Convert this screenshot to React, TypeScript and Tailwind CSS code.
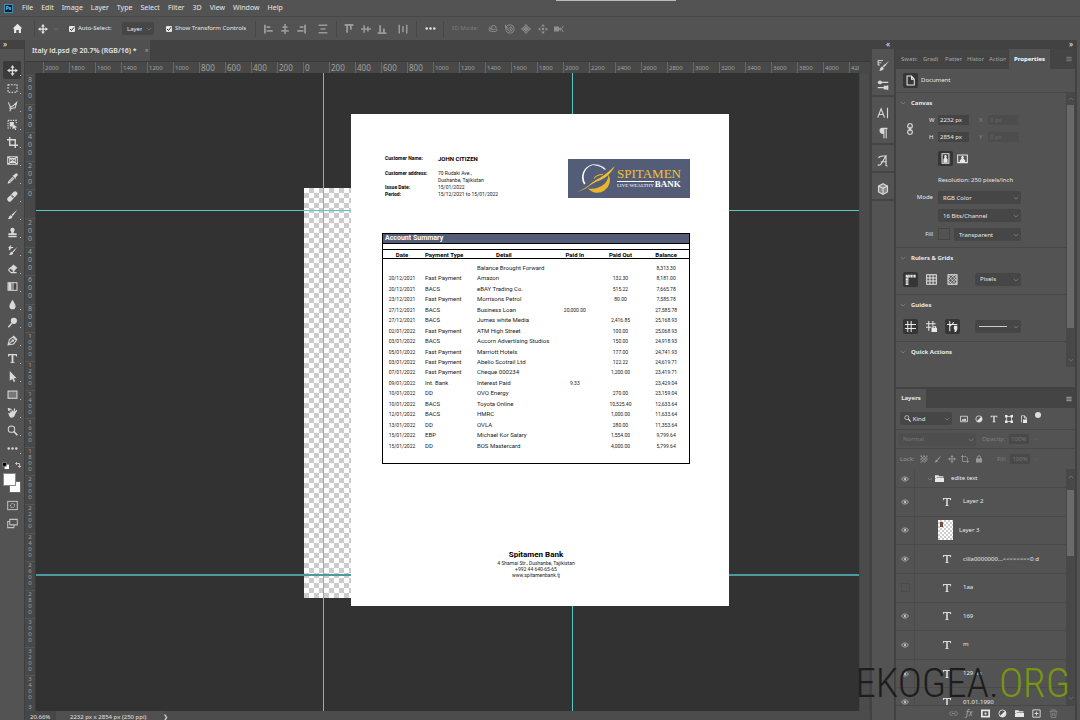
import React, { useState } from "react";

type IconProps = { className?: string; children: React.ReactNode };

const Icon = ({ className = "size-3", children }: IconProps) => (
  <svg viewBox="0 0 16 16" className={`shrink-0 ${className}`} fill="none" stroke="currentColor" strokeWidth="1.5" aria-hidden="true">
    {children}
  </svg>
);

const solid = { fill: "currentColor", stroke: "none" };

const glyphs: Record<string, React.ReactNode> = {
  home: <path {...solid} d="M8 1 15 8h-2v6.500H9.800V10H6.200v4.500H3V8H1z" />,
  move: (
    <>
      <path strokeWidth="2" d="M8 3v10M3 8h10" />
      <path {...solid} d="M8 0l3 4H5zM8 16l-3-4h6zM0 8l4-3v6zM16 8l-4 3V5z" />
    </>
  ),
  marquee: <rect x="1.500" y="2.500" width="13" height="11" strokeDasharray="2.600 1.600" />,
  lasso: <path d="M2 2l3 7 4-2 5-5-2 8-6 1-3-1M6 11l-2 4" />,
  quick: (
    <>
      <path strokeDasharray="2 1.500" d="M1.500 2h12v5M1.500 2v11H6" />
      <path {...solid} d="M4 4.500h6V8L8 7v4H4zM8 7l7 5-3 .500 1.500 3-1.600.500-1.500-3L8 15z" />
    </>
  ),
  crop: <path strokeWidth="2" d="M4 0v12h12M0 4h12v12" />,
  frame: (
    <>
      <path d="M1 2.500h14v11H1zM1 2.500l14 11M15 2.500l-14 11" />
      <path d="M4 5h8v6H4z" />
    </>
  ),
  dropper: (
    <>
      <path d="M9 6l-6.500 6.500L2 14.500l2-.500L10.500 7.500" />
      <path {...solid} d="M8 4l4.500 4.500 1-1-1-1L15 4a2 2 0 0 0-3-3L9.500 3.500l-.700-.700z" />
    </>
  ),
  heal: (
    <>
      <path {...solid} d="M1.500 9.500l8-8a3 3 0 0 1 4.500 0 3 3 0 0 1 0 4.500l-8 8.500a3 3 0 0 1-4.500 0 3.400 3.400 0 0 1 0-5z" />
      <path stroke="#535353" strokeWidth="1" d="M5 6l5 5M6 5l5 5M7 8l2 0" />
    </>
  ),
  brush: <path {...solid} d="M15 1L8.500 10 6.500 8.200zM6 9l2 2c-.300 3-3.500 4-7 3.500C3 13.500 2.500 9.500 6 9z" />,
  stamp: <path {...solid} d="M6.500 9C6.500 7 5 6 5 4a3 3 0 0 1 6 0c0 2-1.500 3-1.500 5H14v3H2V9zM2 13h12v2H2z" />,
  history: (
    <>
      <path {...solid} d="M15 3L9.500 10.500 8 9zM7.500 9.500l1.500 2c-.500 2.500-3 3.500-6 3 1.500-1 1.500-4.500 4.500-5z" />
      <path d="M3 3.500h6M3.500 3.500v4M6 1L3 3.500 6 6" />
    </>
  ),
  eraser: (
    <>
      <path d="M2 10l4 4h8M2 10l3-3 5 5-2 2" />
      <path {...solid} d="M5 6.500L9.500 2 15 7l-4.500 4.800z" />
    </>
  ),
  drop: <path {...solid} d="M8 1c2 4 4.500 6 4.500 9.500a4.500 4.500 0 0 1-9 0C3.500 7 6 5 8 1z" />,
  dodge: (
    <>
      <circle {...solid} cx="10" cy="5.500" r="4.500" />
      <path strokeWidth="2" d="M7 9l-5 6" />
    </>
  ),
  pen: (
    <>
      <path d="M1.500 14.500l2-8 5-3.500 5 5-4 5z" />
      <path d="M2 14l5.500-5.500" />
      <circle cx="8.500" cy="8" r="1" />
      <path strokeWidth="2" d="M9 1.500l5.500 5.500" />
    </>
  ),
  type: <path {...solid} d="M1.500 1.500h13V5h-1.200c-.300-1.400-.800-1.800-2-1.800H9.300v9c0 .900.400 1.200 1.700 1.300v1H5v-1c1.300-.100 1.700-.400 1.700-1.300v-9h-2c-1.200 0-1.700.400-2 1.800H1.500z" />,
  arrow: <path {...solid} d="M4 0l10 10.500-4.200.200 2.200 4.300-2 1-2.200-4.500L4 14z" />,
  rect: <rect x="1.500" y="3" width="13" height="10.500" fill="#777" />,
  hand: <path {...solid} d="M2 9c1-1.500 2 0 2.500.500L5 5l1.500 3 .500-5L9 7l2-6 1 2-1 4 3-3 .800 1.500-3 5c-1 4-3 5-5.500 5S2.500 12 2 9zM1 1l6 2-5 3z" />,
  search: (
    <>
      <circle cx="6.500" cy="6" r="4.700" />
      <path strokeWidth="2.400" d="M10 9.500l5 5.500" />
    </>
  ),
  dots: (
    <g {...solid}>
      <circle cx="2.500" cy="8" r="1.800" />
      <circle cx="8" cy="8" r="1.800" />
      <circle cx="13.500" cy="8" r="1.800" />
    </g>
  ),
  gradient: (
    <>
      <rect x="1.500" y="2.500" width="13" height="11" fill="#444" />
      <path {...solid} d="M2 3h4v10H2z" />
      <path {...solid} opacity=".500" d="M6 3h4v10H6z" />
    </>
  ),
  mask: (
    <>
      <rect x="1" y="2" width="14" height="12" />
      <circle cx="8" cy="8" r="3" strokeDasharray="1.500 1" />
    </>
  ),
  screen: <path d="M4 10V2h11v8H4M4 5H1v9h9v-3" />,
  alignLeft: <path d="M1.500 1v14M4 5h6M4 11h10" strokeWidth="3" />,
  alignMid: <path d="M8 0v16M4 5h8M2 11h12" strokeWidth="2.600" />,
  alignRight: <path d="M14.500 1v14M6 5h6M2 11h10" strokeWidth="3" />,
  distribute: <path d="M1 2h14M1 14h14M4 8h8" strokeWidth="2.200" />,
  alignTop: <path d="M1 1.500h14M5 3v11M11 3v6" strokeWidth="3" />,
  alignCenter: <path d="M0 8h16M5 2v12M11 4v8" strokeWidth="2.600" />,
  alignBottom: <path d="M1 14.500h14M5 2v11M11 7v6" strokeWidth="3" />,
  distributeH: <path d="M2 1v14M14 1v14M8 3v10" strokeWidth="2.400" />,
  orbit: <path d="M5 6a4 4 0 1 1 8 1c3 2 1 6-4 5-5 1-9-2-7-4 2-1 6 3 10 0M2 4l2 4 3-2" />,
  roll: (
    <>
      <circle cx="8" cy="8" r="6.500" />
      <path d="M8 4.500a3.500 3.500 0 1 1-3 2M1 1v5h4M8 5v3l2 2" />
    </>
  ),
  slide: (
    <>
      <path d="M8 1v14M1 8h14" />
      <path d="M8 1l3 3-3 2-3-2zM8 15l3-3-3-2-3 2zM1 8l3-3 2 3-2 3zM15 8l-3-3-2 3 2 3z" />
    </>
  ),
  pan: (
    <g {...solid}>
      <circle cx="8" cy="8" r="2" />
      <path d="M8 0l3 4H5zM8 16l-3-4h6zM0 8l4-3v6zM16 8l-4 3V5z" />
    </g>
  ),
  camera: (
    <>
      <path {...solid} d="M0 4h8v8H0zM8 7l3-2v6L8 9z" />
      <path d="M15 3l-3 5 3 5" />
    </>
  ),
  brushes: (
    <>
      <path strokeWidth="1.200" d="M1 2h7M1 5h5M1 8h3M1.500 2v6" />
      <path {...solid} d="M16 3l-6.500 8-2-1.700zM7 10l2 2c0 3-3 4-6 3.500C4.500 14 4 10.500 7 10z" />
    </>
  ),
  sliders: (
    <>
      <path d="M1 4.500h14M1 11.500h14" />
      <circle {...solid} cx="4" cy="4.500" r="2.600" />
      <path {...solid} d="M9 9h4l2-1v7l-2-1H9z" />
    </>
  ),
  char: <path d="M1 14L5.500 2.500 10 14M2.500 10h6M14 1v14" />,
  para: <path {...solid} d="M6.500 1H14v1.500h-1V15h-1.500V2.500H10V15H8.500V9A4 4 0 0 1 6.500 1z" />,
  styles: <path d="M1 13c4 3 7-6 11-12v13l2 1M5 9h8M2 4c2-4 6-2 10-3" />,
  cube: (
    <>
      <path fill="#8a8a8a" d="M8 1l6 3v8l-6 3-6-3V4z" />
      <path d="M2 4l6 3 6-3M8 7v8" />
    </>
  ),
  doc: <path d="M3 1.500h6.500L13.500 6v8.500H3zM9.500 1.500V6h4" />,
  link: (
    <>
      <rect x="5" y="1" width="6" height="6" rx="2.500" />
      <rect x="5" y="9" width="6" height="6" rx="2.500" />
      <path d="M8 5v6" />
    </>
  ),
  portrait: (
    <>
      <path d="M3 1h10v14H3z" />
      <path {...solid} d="M8 3a2 2 0 0 1 1.200 3.600L11 9v5H5V9l1.800-2.400A2 2 0 0 1 8 3z" />
    </>
  ),
  landscape: (
    <>
      <path d="M1 3h14v11H1z" />
      <path {...solid} d="M8 4.500a2 2 0 0 1 1.200 3.600L12 11v2H4v-2l2.800-2.900A2 2 0 0 1 8 4.500z" />
    </>
  ),
  ruler: <path strokeWidth="4" strokeDasharray="1.800 .500" d="M3 16V3h13" />,
  grid: <path d="M1 1h14v14H1zM1 5.700h14M1 10.300h14M5.700 1v14M10.300 1v14" />,
  pixelGrid: (
    <>
      <path d="M1.500 1h13v14h-13z" />
      <path strokeWidth="1" d="M2 5l4-4M2 10l9-9M2 15L14 3M6 15l8-8M11 15l3-3M10 1l4 4M6 1l8 9M2 3l12 12M2 9l6 6" />
    </>
  ),
  guide: <path d="M4 0v16M9 0v16M0 5h16M0 11h16" />,
  guideLock: (
    <>
      <path d="M4 0v14M10 0v7M0 4h14M0 9h8" />
      <path {...solid} d="M8 10h8v6H8z" />
      <path d="M10 11V8.500h4V11" />
    </>
  ),
  guideSmart: (
    <>
      <path d="M4 0v15M0 5h15M4 8l6-6" />
      <path {...solid} d="M10 7h5v5l-2 4h-2V12h-1z" />
    </>
  ),
  picture: (
    <>
      <path d="M1 2.500h14v11H1z" />
      <path {...solid} d="M3 11.500l3-4 2 2 2-3.500 3 5.500z" />
    </>
  ),
  adjust: (
    <>
      <circle cx="8" cy="8" r="6.300" />
      <path {...solid} d="M12.500 3.500A6.400 6.400 0 0 1 3.500 12.500z" />
    </>
  ),
  shape: (
    <>
      <path d="M3 3h10v10H3z" />
      <path {...solid} d="M0 0h5v5H0zM11 0h5v5h-5zM0 11h5v5H0zM11 11h5v5h-5z" />
    </>
  ),
  smart: (
    <>
      <path d="M3 15V1.500h6L13 6v3M9 1.500V6h4" />
      <path {...solid} d="M6 9h8v7H6z" />
    </>
  ),
  checker: <path {...solid} d="M1 1h3v3H1zM7 1h3v3H7zM4 4h3v3H4zM10 4h3v3h-3zM1 7h3v3H1zM7 7h3v3H7zM4 10h3v3H4zM10 10h3v3h-3zM13 1h2v3h-2zM13 7h2v3h-2zM1 13h3v2H1zM7 13h3v2H7z" />,
  artboard: <path d="M3 0v13h13M0 3h10l3 3v10" />,
  lock: (
    <>
      <rect {...solid} x="2" y="7" width="12" height="8" />
      <path strokeWidth="2" d="M5 8V4.500a3 3 0 0 1 6 0V8" />
    </>
  ),
  eye: (
    <>
      <path d="M1 8c3.500-5.500 10.500-5.500 14 0-3.500 5.500-10.500 5.500-14 0z" />
      <circle {...solid} cx="8" cy="8" r="2.600" />
    </>
  ),
  folder: <path {...solid} d="M0 2h6l1.500 2H15v2H3l-1.500 4V7H0zM3 7h13v7H0V8z" />,
  chain: <path d="M7 5H4a3 3 0 0 0 0 6h3M9 5h3a3 3 0 0 1 0 6H9M5 8h6" />,
  layerMask: (
    <>
      <path strokeWidth="3" d="M1.500 2.500h13v11h-13z" />
      <circle {...solid} cx="8" cy="8" r="2" />
    </>
  ),
  plus: <path d="M1.500 1.500h13v13h-13zM8 4.500v7M4.500 8h7" />,
  trash: <path d="M1 4h14M5 4V1.500h6V4M3 4l1 11h8l1-11M6.500 6.500v6M9.500 6.500v6" />,
  chevron: <path d="M2 5l6 6 6-6" />,
  chevronUp: <path d="M2 11l6-6 6 6" />,
  menu: <path d="M1 3.500h14M1 8h14M1 12.500h14" />,
  swap: <path d="M4 5h7v7M6 2L3 5l3 3M8 10l3 3 3-3" />,
};

const G = ({ name, className }: { name: string; className?: string }) => <Icon className={className}>{glyphs[name]}</Icon>;

const menus = ["File", "Edit", "Image", "Layer", "Type", "Select", "Filter", "3D", "View", "Window", "Help"];

const tools = [
  "move", "marquee", "lasso", "quick", "crop", "frame", "dropper", "heal", "brush", "stamp", "history",
  "eraser", "gradient", "drop", "dodge", "pen", "type", "arrow", "rect", "hand", "search", "dots",
];

const horizontalMarks = Array.from({ length: 32 }, (_, i) => Math.abs(i - 10) * 200);
const verticalMarks = Array.from({ length: 22 }, (_, i) => Math.abs(i - 4) * 200);

const rows = [
  ["", "", "Balance Brought Forward", "", "", "8,313.30"],
  ["20/12/2021", "Fast Payment", "Amazon", "", "132.30", "8,181.00"],
  ["20/12/2021", "BACS", "eBAY Trading Co.", "", "515.22", "7,665.78"],
  ["23/12/2021", "Fast Payment", "Morrisons Petrol", "", "80.00", "7,585.78"],
  ["27/12/2021", "BACS", "Business Loan", "20,000.00", "", "27,585.78"],
  ["27/12/2021", "BACS", "Jumes white Media", "", "2,416.85", "25,168.93"],
  ["02/01/2022", "Fast Payment", "ATM High Street", "", "100.00", "25,068.93"],
  ["03/01/2022", "BACS", "Accorn Advertising Studios", "", "150.00", "24,918.93"],
  ["05/01/2022", "Fast Payment", "Marriott Hotels", "", "177.00", "24,741.93"],
  ["03/01/2022", "Fast Payment", "Abelio Scotrail Ltd", "", "122.22", "24,619.71"],
  ["07/01/2022", "Fast Payment", "Cheque 000234", "", "1,200.00", "23,419.71"],
  ["09/01/2022", "Int. Bank", "Interest Paid", "9.33", "", "23,429.04"],
  ["10/01/2022", "DD", "OVO Energy", "", "270.00", "23,159.04"],
  ["10/01/2022", "BACS", "Toyota Online", "", "10,525.40", "12,633.64"],
  ["12/01/2022", "BACS", "HMRC", "", "1,000.00", "11,633.64"],
  ["13/01/2022", "DD", "OVLA", "", "280.00", "11,353.64"],
  ["15/01/2022", "EBP", "Michael Kor Salary", "", "1,554.00", "9,799.64"],
  ["15/01/2022", "DD", "BOS Mastercard", "", "4,000.00", "5,799.64"],
];

const layers = [
  { name: "Layer 2", kind: "text", visible: true },
  { name: "Layer 3", kind: "image", visible: true },
  { name: "cilla0000000...<<<<<<<<0 d", kind: "text", visible: true },
  { name: "1aa", kind: "text", visible: false },
  { name: "169", kind: "text", visible: true },
  { name: "m", kind: "text", visible: true },
  { name: "129 aa", kind: "text", visible: true },
  { name: "01.01.1990", kind: "text", visible: true },
];

const Divider = () => <span className="mx-auto h-4 w-px bg-[#474747]" />;

type DropProps = { label: string; options: string[]; className: string; dim?: boolean };

const Drop = ({ label, options, className, dim }: DropProps) => (
  <div className={`relative ${className}`}>
    <select
      aria-label={label}
      className={`block h-[13px] w-full appearance-none rounded-xs pl-[5px] pr-3 text-[6px] leading-[12px] outline-none ${dim ? "bg-[#4e4e4e] text-[#777]" : "bg-[#464646] text-[#e8e8e8]"}`}
    >
      {options.map((option) => (
        <option key={option}>{option}</option>
      ))}
    </select>
    <G name="chevron" className="pointer-events-none absolute right-[2px] top-[4px] size-[6px] text-[#999]" />
  </div>
);

const MenuBar = () => (
  <nav className="relative flex h-[17px] shrink-0 items-center border-b border-[#484848]">
    <span className="ml-1 mr-[9px] flex size-[9px] items-center justify-center border border-[#3193c4] bg-[#071e33] text-[5px] font-bold leading-[7px] text-[#71c9f4]">Ps</span>
    <ul className="flex gap-2">
      {menus.map((item) => (
        <li key={item} className="flex">
          <button className="text-[7px] leading-3">{item}</button>
        </li>
      ))}
    </ul>
    <span className="absolute left-[556px] top-0 h-px w-[120px] bg-[#b8bcbc]" />
  </nav>
);

const IconRow = ({ names, className }: { names: string[]; className: string }) => (
  <div className={`flex justify-between ${className}`}>
    {names.map((name) => (
      <button key={name} aria-label={name}>
        <G name={name} className="size-[10px]" />
      </button>
    ))}
  </div>
);

const Check = ({ children }: { children: React.ReactNode }) => (
  <label className="flex items-center gap-[3px] whitespace-nowrap">
    <span className="relative flex size-[6px]">
      <input type="checkbox" defaultChecked className="size-[6px] appearance-none rounded-[1px] bg-[#e6e6e6]" />
      <svg viewBox="0 0 6 6" className="pointer-events-none absolute inset-0" fill="none" stroke="#333">
        <path d="M1 3l1.500 1.500L5 1.300" />
      </svg>
    </span>
    {children}
  </label>
);

const OptionsBar = () => (
  <div className="flex h-[23px] shrink-0 items-center text-[6px]">
    <button aria-label="home" className="w-[34px] pl-3">
      <G name="home" className="size-[11px]" />
    </button>
    <span className="h-4 w-px bg-[#474747]" />
    <G name="move" className="ml-[3px] size-[10px]" />
    <G name="chevron" className="ml-[5px] size-[6px] text-[#888]" />
    <div className="ml-[10px] w-[53px]">
      <Check>Auto-Select:</Check>
    </div>
    <Drop label="Auto-Select" options={["Layer", "Group"]} className="w-8" />
    <div className="ml-3 w-[89px]">
      <Check>Show Transform Controls</Check>
    </div>
    <span className="h-4 w-px bg-[#474747]" />
    <IconRow names={["alignLeft", "alignMid", "alignRight"]} className="ml-2 w-[42px] text-[#999]" />
    <IconRow names={["distribute"]} className="ml-3 w-[10px] text-[#999]" />
    <div className="flex w-[16px]"><Divider /></div>
    <IconRow names={["alignTop", "alignCenter", "alignBottom"]} className="w-[43px] text-[#999]" />
    <IconRow names={["distributeH"]} className="ml-[11px] w-[10px] text-[#999]" />
    <div className="flex w-[17px]"><Divider /></div>
    <button aria-label="More options">
      <G name="dots" className="size-[11px]" />
    </button>
    <div className="flex w-[15px]"><Divider /></div>
    <span className="w-[37px] text-[#7c7c7c]">3D Mode:</span>
    <IconRow names={["orbit", "roll", "slide", "pan", "camera"]} className="w-[76px] text-[#8f8f8f]" />
  </div>
);

const Toolbar = () => {
  const [active, setActive] = useState("move");
  return (
    <aside className="flex w-[25px] shrink-0 flex-col items-center border-r border-[#3f3f3f]">
      <div className="h-[9px] w-full bg-[#424242] pl-[3px] text-[8px] leading-[7px]">»</div>
      <div className="h-3" />
      {tools.map((tool) => (
        <button
          key={tool}
          aria-label={tool}
          onClick={() => setActive(tool)}
          className={`relative flex h-[18px] w-[18px] shrink-0 items-center justify-center rounded-xs ${active === tool ? "bg-[#3a3a3a]" : ""}`}
        >
          <G name={tool} className="size-[11px] text-[#dadada]" />
          <span className="absolute bottom-[3px] right-0 size-px bg-[#bbb]" />
        </button>
      ))}
      <div className="mt-1 flex h-2 w-5 items-center justify-between">
        <Icon className="size-[7px]">
          <path fill="#fff" stroke="none" d="M6 6h10v10H6z" />
          <path fill="#000" stroke="#999" d="M1 1h9v9H1z" />
        </Icon>
        <G name="swap" className="size-2" />
      </div>
      <div className="relative mt-[4px] h-5 w-[18px]">
        <button aria-label="Background colour" className="absolute bottom-0 right-0 size-3 border border-[#666] bg-white" />
        <button aria-label="Foreground colour" className="absolute left-0 top-0 size-[13px] border border-[#888] bg-white" />
      </div>
      <button aria-label="mask" className="mt-[7px]">
        <G name="mask" className="size-[11px] text-[#c0c0c0]" />
      </button>
      <button aria-label="screen" className="mt-[7px]">
        <G name="screen" className="size-[11px] text-[#c0c0c0]" />
      </button>
    </aside>
  );
};

const BankLogo = () => (
  <div className="flex h-[39px] w-[122px] items-center bg-[#545d77] pl-2 font-['Liberation_Serif',serif]">
    <svg viewBox="0 0 40 30" className="w-10 shrink-0" fill="none">
      <path d="M31 6.500A13 13 0 0 0 8 20.500L9.500 19.500A11.300 11.300 0 0 1 31 6.500z" fill="#fff" />
      <path d="M30 5.500A13 13 0 0 0 17 1.500C22 1.500 26 3 28 5.500z" fill="#fff" />
      <path d="M12 24.500A12.500 12.500 0 0 0 32.500 10.500C32.500 19 24 26 12 24.500z" fill="#e9b62b" />
      <path d="M1 28C11 24 15 19 20 16 26 13 30 10 39 2 34 11 28 15 22 17 14 20 10 26 1 28z" fill="#f2c230" />
      <path d="M18 14.500C20 11.500 23 10.500 27 10.500" stroke="#e9b62b" strokeWidth="1.200" />
    </svg>
    <div className="whitespace-nowrap pl-px">
      <div className="text-[13px] leading-[12px] text-[#f2c230]">SPITAMEN</div>
      <div className="flex items-center gap-px text-white">
        <span className="border-t border-white text-[5px] leading-[7px]">LIVE WEALTHY</span>
        <span className="text-[9px] font-bold leading-[9px]">BANK</span>
      </div>
    </div>
  </div>
);

const details = [
  { label: "Customer Name:", value: "JOHN CITIZEN" },
  { label: "Customer address:", value: "70 Rudaki Ave.," },
  { label: "", value: "Dushanbe, Tajikistan" },
  { label: "Issue Date:", value: "15/01/2022" },
  { label: "Period:", value: "15/12/2021 to 15/01/2022" },
];

const Statement = () => (
  <article className="absolute left-[315px] top-[41px] flex h-[492px] w-[378px] flex-col bg-white pl-[31px] pr-[39px] pt-[41px] font-['Roboto',sans-serif] text-[5px] text-[#222]">
    <header className="flex justify-between">
      <dl className="pl-[3px] leading-[7px]">
        {details.map((item, index) => (
          <div key={item.value} className={`flex ${index === 0 ? "mb-2" : ""}`}>
            <dt className="w-[53px] font-bold text-black">{item.label}</dt>
            <dd className={index === 0 ? "text-[6px] font-bold text-black" : ""}>{item.value}</dd>
          </div>
        ))}
      </dl>
      <div className="pt-1">
        <BankLogo />
      </div>
    </header>
    <section className="mt-[35px] h-[231px] border border-black">
      <h2 className="h-[10px] border-b border-black bg-[#545d77] pl-[2px] text-[7px] font-bold leading-[9px] text-white">Account Summary</h2>
      <div className="h-[5px]" />
      <table className="h-[202px] w-full table-fixed border-collapse text-center">
        <thead>
          <tr className="h-[9px] border-y border-black text-[6px] leading-[7px] text-black">
            <th className="w-[38px] p-0">Date</th>
            <th className="w-[54px] p-0 pl-1 text-left">Payment Type</th>
            <th className="w-[77px] p-0 pl-[21px] text-left">Detail</th>
            <th className="p-0">Paid In</th>
            <th className="p-0">Paid Out</th>
            <th className="p-0">Balance</th>
          </tr>
        </thead>
        <tbody className="leading-[6px]">
          <tr className="h-1"><td colSpan={6} className="p-0" /></tr>
          {rows.map((row, i) => (
            <tr key={i} className="h-[10px]">
              {row.map((cell, j) => (
                <td
                  key={j}
                  className={`whitespace-nowrap p-0 ${j === 1 ? "pl-1 text-left text-[6px]" : ""} ${j === 2 ? "pl-[2px] text-left text-[6px]" : ""}`}
                >
                  {cell}
                </td>
              ))}
            </tr>
          ))}
        </tbody>
      </table>
    </section>
    <footer className="mt-[86px] text-center leading-[6px]">
      <h3 className="text-[8px] font-bold leading-[10px] text-black">Spitamen Bank</h3>
      <p>4 Shamai Str., Dushanbe, Tajikistan</p>
      <p>+992 44 640-65-65</p>
      <p>www.spitamenbank.tj</p>
    </footer>
  </article>
);

const Workspace = () => (
  <main className="flex min-w-0 flex-1 flex-col bg-[#424242]">
    <div className="flex h-[21px] shrink-0 items-stretch">
      <button className="flex w-[125px] items-center gap-2 whitespace-nowrap bg-[#505050] pl-[7px] pt-px text-[7px] font-semibold text-[#e4e4e4]">
        Italy id.psd @ 20.7% (RGB/16) *<span className="text-[#999]">×</span>
      </button>
    </div>
    <div className="flex h-3 shrink-0 border-t border-[#3a3a3a] bg-[#484848] pl-[18px] pr-[11px] leading-[12px] text-[#a0a0a0]">
      <div className="flex min-w-0 overflow-hidden">
        {horizontalMarks.map((mark, i) => (
          <span key={i} className={`w-[26px] shrink-0 border-l border-[#666] pl-px ${mark < 1000 ? "text-[8px]" : "text-[6px]"}`}>{mark}</span>
        ))}
      </div>
    </div>
    <div className="flex min-h-0 flex-1">
      <div className="flex w-[11px] shrink-0 flex-col overflow-hidden border-r border-[#3a3a3a] bg-[#484848] pt-[2px] text-center text-[#a0a0a0]">
        {verticalMarks.map((mark, i) => (
          <div
            key={i}
            className={`min-h-0 flex-1 border-t border-[#555] px-[3px] [word-break:break-all] ${mark < 1000 ? "text-[7px] leading-[8px]" : "text-[6px] leading-[6px]"}`}
          >
            {mark}
          </div>
        ))}
        <div className="h-[7px] overflow-hidden text-[6px] leading-[7px]">3</div>
      </div>
      <div className="relative min-w-0 flex-1 overflow-hidden bg-[#323232]">
        <div className="absolute left-[268px] top-[115px] h-[410px] w-[291px] bg-white bg-[conic-gradient(#ccc_25%,#fff_0_50%,#ccc_0_75%,#fff_0)] bg-size-[10px_10px]" />
        <span className="absolute inset-y-0 left-[287px] w-px bg-[#57c7c4]" />
        <span className="absolute inset-y-0 left-[536px] w-px bg-[#57c7c4]" />
        <span className="absolute inset-x-0 top-[137px] h-px bg-[#57c7c4]" />
        <span className="absolute inset-x-0 top-[501px] h-[2px] bg-[#4a9a9e]" />
        <Statement />
      </div>
      <div className="w-[11px] shrink-0 border-x border-[#454545] bg-[#4b4b4b]" />
    </div>
    <div className="flex h-[9px] shrink-0 overflow-hidden bg-[#4c4c4c] text-[6px] leading-[13px] text-[#e0e0e0]">
      <span className="w-[31px] bg-[#464646] pl-[5px]">20.66%</span>
      <span className="w-[107px] bg-[#505050] pl-[14px]">2232 px x 2854 px (250 ppi)</span>
      <span>❯</span>
    </div>
  </main>
);

const dockGroups = [["brushes", "sliders"], ["char", "para"], ["styles"], ["cube"]];

const Dock = () => (
  <aside className="w-[26px] shrink-0 border-x-2 border-[#424242] bg-[#535353]">
    <div className="h-[9px] bg-[#424242] pr-1 text-right text-[8px] leading-[7px]">«</div>
    {dockGroups.map((group) => (
      <div key={group[0]} className="flex flex-col items-center border-b-2 border-[#454545] pt-[6px]">
        {group.map((name) => (
          <button key={name} aria-label={name} className="flex h-[20px] items-center">
            <G name={name} className="size-[12px] text-[#d8d8d8]" />
          </button>
        ))}
      </div>
    ))}
  </aside>
);

const Section = ({ title, children }: { title: string; children?: React.ReactNode }) => (
  <section className="border-b border-[#474747] last:border-0">
    <button className="flex h-5 items-center gap-[5px] pl-1 text-[6px] font-bold">
      <G name="chevron" className="size-[6px] text-[#999]" />
      {title}
    </button>
    {children}
  </section>
);

const Field = ({ label, value, dim }: { label: string; value: string; dim?: boolean }) => (
  <label className={`flex items-center gap-[3px] ${dim ? "text-[#8a8a8a]" : ""}`}>
    <span className="w-[6px]">{label}</span>
    <input
      defaultValue={value}
      className={`h-[10px] w-[31px] pl-[2px] text-[6px] outline-none ${dim ? "bg-[#4d4d4d] text-[#666]" : "bg-[#444] text-[#e6e6e6]"}`}
    />
  </label>
);

const IconButton = ({ name, on }: { name: string; on?: boolean }) => (
  <button aria-label={name} className={`flex size-[15px] items-center justify-center rounded-xs ${on ? "bg-[#363636]" : ""}`}>
    <G name={name} className="size-[11px]" />
  </button>
);

const Properties = () => (
  <div className="flex h-[347px] shrink-0 flex-col">
    <div className="h-[9px] shrink-0 bg-[#424242] pr-[2px] text-right text-[8px] leading-[7px]">»</div>
    <div className="flex h-5 shrink-0 items-center bg-[#444] text-[6px] text-[#a4a4a4]">
      {["Swatc", "Gradi", "Patter", "Histor", "Action"].map((tab) => (
        <button key={tab} className="w-[22px] shrink-0 overflow-hidden whitespace-nowrap pl-[5px] text-left">{tab}</button>
      ))}
      <button className="ml-[3px] h-full w-[41px] bg-[#535353] font-bold text-white">Properties</button>
      <button aria-label="Panel menu" className="ml-auto mr-[3px]">
        <G name="menu" className="size-[6px]" />
      </button>
    </div>
    <div className="flex h-[24px] shrink-0 items-center gap-[3px] border-b border-[#474747] pl-[7px] text-[6px]">
      <IconButton name="doc" on />
      Document
    </div>
    <div className="flex h-[274px] text-[6px]">
      <div className="min-w-0 flex-1">
        <Section title="Canvas">
          <div className="flex h-[31px] items-center">
            <G name="link" className="ml-2 mr-[13px] size-[12px]" />
            <div className="flex flex-col gap-[7px]">
              <div className="flex gap-[10px]"><Field label="W" value="2232 px" /><Field label="X" value="0 px" dim /></div>
              <div className="flex gap-[10px]"><Field label="H" value="2854 px" /><Field label="Y" value="0 px" dim /></div>
            </div>
          </div>
          <div className="flex gap-[2px] pl-[42px] pt-[7px]">
            <IconButton name="portrait" on />
            <IconButton name="landscape" />
          </div>
          <p className="pl-[42px] pt-2 leading-[12px]">Resolution: 250 pixels/inch</p>
          <div className="flex pt-[5px]">
            <span className="w-[42px] pr-[5px] text-right leading-[12px]">Mode</span>
            <Drop label="Mode" options={["RGB Color"]} className="w-[83px]" />
          </div>
          <div className="pl-[42px] pt-[5px]">
            <Drop label="Depth" options={["16 Bits/Channel"]} className="w-[83px]" />
          </div>
          <div className="flex pb-[6px] pt-[6px]">
            <span className="w-[42px] pr-[5px] text-right leading-[12px]">Fill</span>
            <span className="mr-1 size-[12px] border border-[#454545]" />
            <Drop label="Fill" options={["Transparent"]} className="w-[67px]" />
          </div>
        </Section>
        <Section title="Rulers & Grids">
          <div className="flex h-[26px] items-center gap-[6px] pb-1 pl-[7px]">
            <IconButton name="ruler" on />
            <IconButton name="grid" />
            <IconButton name="pixelGrid" />
            <Drop label="Units" options={["Pixels"]} className="ml-[9px] w-[46px]" />
          </div>
        </Section>
        <Section title="Guides">
          <div className="flex h-[26px] items-center gap-[6px] pb-1 pl-[7px]">
            <IconButton name="guide" on />
            <IconButton name="guideLock" />
            <IconButton name="guideSmart" on />
            <div className="relative ml-[9px]">
              <Drop label="Guide style" options={[""]} className="w-[46px]" />
              <span className="pointer-events-none absolute left-1 top-[6px] h-px w-7 bg-[#ccc]" />
            </div>
          </div>
        </Section>
        <Section title="Quick Actions" />
      </div>
      <div className="flex w-[9px] shrink-0 flex-col items-center bg-[#484848]">
        <G name="chevronUp" className="my-[3px] size-[6px] text-[#888]" />
        <span className="h-[223px] w-[7px] bg-[#696969]" />
        <G name="chevron" className="mb-1 mt-auto size-[6px] text-[#888]" />
      </div>
    </div>
  </div>
);

const Eye = ({ visible, name }: { visible: boolean; name: string }) => (
  <button aria-label={`Toggle ${name}`} className="flex h-full w-[19px] shrink-0 items-center justify-center border-r border-[#4b4b4b]">
    {visible ? <G name="eye" className="size-[8px] text-[#bbb]" /> : <span className="size-[9px] border border-[#4b4b4b]" />}
  </button>
);

const Layers = () => (
  <div className="flex min-h-0 flex-1 flex-col border-t-2 border-[#424242] text-[6px]">
    <div className="flex h-[19px] shrink-0 items-center bg-[#444]">
      <button className="h-full w-[30px] bg-[#535353] font-bold">Layers</button>
      <button aria-label="Layers menu" className="ml-auto mr-[3px]">
        <G name="menu" className="size-[6px]" />
      </button>
    </div>
    <div className="flex h-[22px] shrink-0 items-center border-b border-[#474747] pl-1">
      <div className="relative">
        <Drop label="Filter" options={["\u00a0\u00a0\u00a0\u00a0\u00a0Kind"]} className="w-[52px]" />
        <G name="search" className="pointer-events-none absolute left-1 top-[3px] size-[7px]" />
      </div>
      <div className="ml-2 flex w-[68px] justify-between">
        {["picture", "adjust", "type", "shape", "smart"].map((name) => (
          <button key={name} aria-label={`Filter ${name}`}>
            <G name={name} className="size-[8px]" />
          </button>
        ))}
      </div>
      <span className="mb-2 ml-[7px] size-[6px] rounded-full bg-[#ddd]" />
    </div>
    <div className="flex h-[19px] shrink-0 items-center border-b border-[#474747] pl-[2px] text-[#808080]">
      <Drop label="Blend mode" options={["Normal"]} className="w-[78px]" dim />
      <label className="ml-[6px] flex items-center gap-1">
        Opacity:
        <input defaultValue="100%" className="h-[10px] w-5 bg-[#494949] pl-[2px] text-[#777]" />
      </label>
      <G name="chevron" className="ml-1 size-[5px] text-[#666]" />
    </div>
    <div className="flex h-5 shrink-0 items-center pl-1 text-[#999]">
      <span className="w-[20px]">Lock:</span>
      <div className="flex w-[63px] justify-between">
        {["checker", "brush", "move", "artboard", "lock"].map((name) => (
          <button key={name} aria-label={`Lock ${name}`}>
            <G name={name} className="size-[8px]" />
          </button>
        ))}
      </div>
      <label className="ml-[14px] flex items-center gap-1 text-[#808080]">
        Fill:
        <input defaultValue="100%" className="h-[10px] w-5 bg-[#494949] pl-[2px] text-[#777]" />
      </label>
      <G name="chevron" className="ml-1 size-[5px] text-[#666]" />
    </div>
    <div className="flex min-h-0 flex-1 overflow-hidden border-b border-[#474747]">
      <div className="min-w-0 flex-1">
        <div className="flex h-[19px] items-center border-b border-[#4a4a4a] pt-px">
          <Eye visible name="edite text" />
          <G name="chevron" className="ml-3 size-[6px] text-[#999]" />
          <G name="folder" className="ml-[2px] size-[9px]" />
          <span className="ml-[7px]">edite text</span>
        </div>
        <ul className="flex h-[229px] flex-col">
          {layers.map((layer) => (
            <li key={layer.name} className="flex flex-1 items-center border-b border-[#4a4a4a]">
              <Eye visible={layer.visible} name={layer.name} />
              {layer.kind === "text" ? (
                <G name="type" className="ml-[27px] mr-[11px] size-[10px] text-[#d8d8d8]" />
              ) : (
                <span className="ml-[23px] mr-[6px] flex h-5 w-[15px] bg-[conic-gradient(#ccc_25%,#fff_0_50%,#ccc_0_75%,#fff_0)] bg-size-[4px_4px]">
                  <span className="ml-[2px] mt-[2px] h-[5px] w-[3px] bg-[#7a4a44]" />
                </span>
              )}
              <span className="whitespace-nowrap">{layer.name}</span>
            </li>
          ))}
        </ul>
      </div>
      <div className="flex w-[9px] shrink-0 flex-col items-center bg-[#484848]">
        <G name="chevronUp" className="mb-[10px] mt-[5px] size-[6px] text-[#999]" />
        <span className="h-[66px] w-[7px] bg-[#6b6b6b]" />
        <G name="chevron" className="mb-1 mt-auto size-[6px] text-[#888]" />
      </div>
    </div>
    <div className="flex h-[14px] shrink-0 items-center justify-between pl-[53px] pr-[17px]">
      <G name="chain" className="size-[9px] text-[#888]" />
      <button className="text-[8px] italic leading-[10px] text-[#aaa]">fx</button>
      {["layerMask", "adjust", "folder", "plus", "trash"].map((name) => (
        <button key={name} aria-label={`New ${name}`}>
          <G name={name} className={`size-[9px] ${name === "trash" ? "text-[#888]" : ""}`} />
        </button>
      ))}
    </div>
  </div>
);

const App: React.FC = () => (
  <div className="relative flex h-screen flex-col overflow-hidden bg-[#535353] font-['Noto_Sans',sans-serif] text-[#e8e8e8]">
    <MenuBar />
    <OptionsBar />
    <div className="flex min-h-0 flex-1">
      <Toolbar />
      <Workspace />
      <Dock />
      <aside className="flex w-[179px] shrink-0 flex-col">
        <Properties />
        <Layers />
      </aside>
      <div className="w-[5px] shrink-0 border-l-2 border-[#424242]" />
    </div>
    <p className="pointer-events-none absolute bottom-[17px] right-[10px] font-['Roboto_Condensed','Roboto',sans-serif] text-[41px] font-light leading-[40px] text-[#1d1d1d]">
      EKOGEA.<span className="text-[#78960f]">ORG</span>
    </p>
  </div>
);

export default App;
